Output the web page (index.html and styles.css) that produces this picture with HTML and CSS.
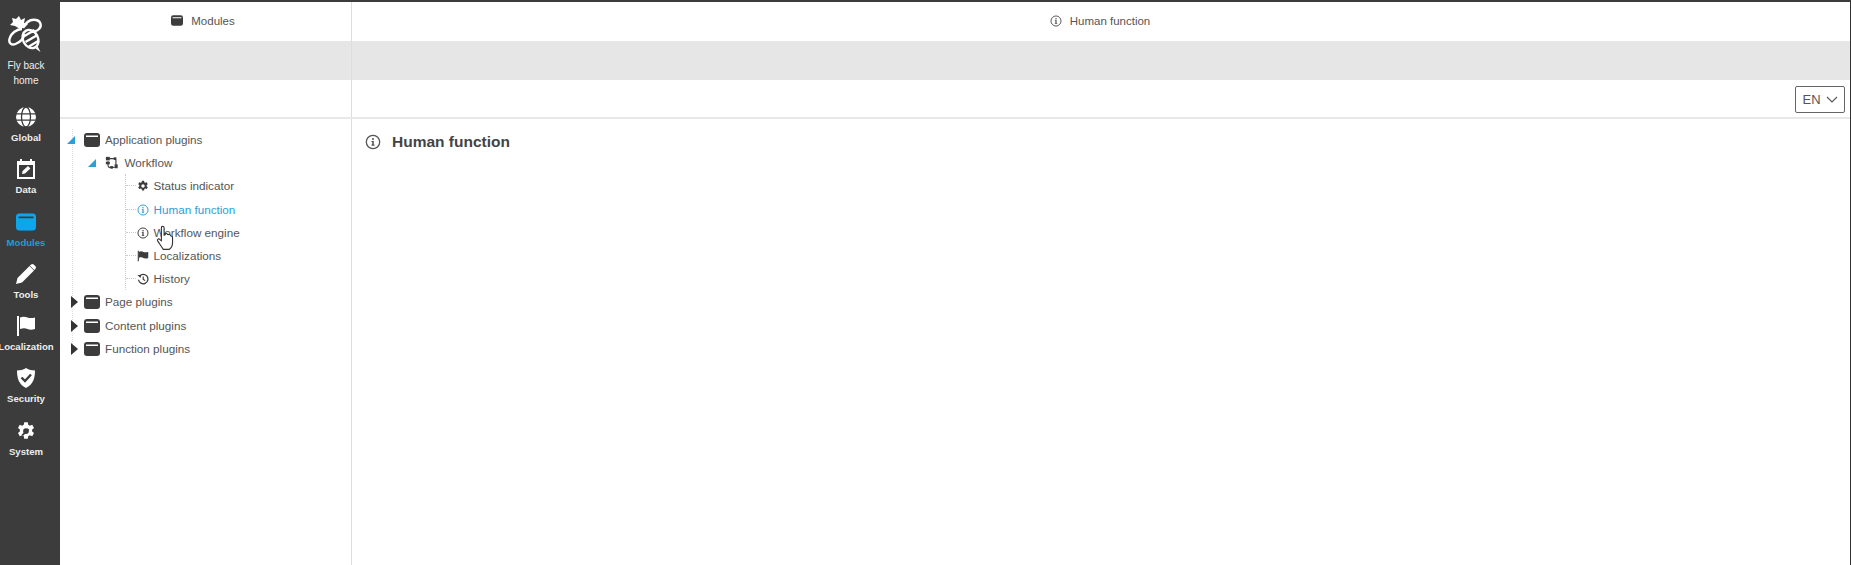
FILE: index.html
```html
<!DOCTYPE html>
<html lang="en">
<head>
<meta charset="utf-8">
<title>Human function</title>
<link rel="stylesheet" href="styles.css">
</head>
<body>
<svg class="defs" width="0" height="0" aria-hidden="true">
  <defs>
    <symbol id="win" viewBox="0 0 16 14"><path fill-rule="evenodd" d="M3 0h10a3 3 0 0 1 3 3v8a3 3 0 0 1-3 3H3a3 3 0 0 1-3-3V3a3 3 0 0 1 3-3zM2 2.600v1.400h12V2.600z"/></symbol>
    <symbol id="info" viewBox="0 0 16 16"><circle cx="8" cy="8" r="6.700" fill="none" stroke="currentColor" stroke-width="1.300"/><rect x="7.200" y="7" width="1.600" height="4.600"/><rect x="6.400" y="10.600" width="3.200" height="1"/><rect x="6.400" y="7" width="2" height="1"/><circle cx="8" cy="5" r="1"/></symbol>
    <symbol id="gear" viewBox="0 0 16 16"><path fill-rule="evenodd" d="M6.600 1h2.800l.4 2 1.300.7 1.900-.7 1.400 2.500-1.500 1.300v1.500l1.500 1.300-1.400 2.500-1.900-.7-1.300.7-.4 2H6.600l-.4-2-1.300-.7-1.900.7L1.600 9.600l1.500-1.300V6.800L1.600 5.500 3 3l1.900.7 1.300-.7zM8 5.700a2.300 2.300 0 1 0 0 4.600 2.300 2.300 0 0 0 0-4.600z"/></symbol>
    <symbol id="flag" viewBox="0 0 16 16"><path d="M1 1h1.500v14H1z"/><path d="M2.500 2.500c2.500-1.200 4.500-.8 6 0s3.500.8 6.500 0v8c-3 1-5 .8-6.500 0s-3.500-1-6 0z"/></symbol>
    <symbol id="hist" viewBox="0 0 16 16"><path fill="none" stroke="currentColor" stroke-width="1.700" d="M3 4.500A6.300 6.300 0 1 1 2 9"/><path d="M.6 2.600l4.800.2-.6 4z"/><path fill="none" stroke="currentColor" stroke-width="1.500" d="M8.300 4.500v4l2.500 1.500"/></symbol>
    <symbol id="flow" viewBox="0 0 16 16"><path fill="none" stroke="currentColor" stroke-width="1.300" d="M5 3h5.500a2 2 0 0 1 2 2v5M11 13H5.500a2 2 0 0 1-2-2V6"/><rect x="1" y="1" width="4.500" height="4"/><rect x="1" y="6.500" width="4.500" height="3"/><rect x="11" y="9.500" width="3.500" height="4.500"/><rect x="6" y="11.500" width="3" height="3"/><rect x="10" y="1.500" width="3" height="3"/></symbol>
  </defs>
</svg>
<div class="app">
  <nav class="rail">
    <a class="brand">
      <svg class="bee" viewBox="0 0 36 36" aria-hidden="true">
        <path fill="#fff" d="M11 0l2 4 4-2-1 5 4 1-3 3-5 2-5-3-5-1 3-3-1-4 4 1z"/>
        <g fill="none" stroke="#fff" stroke-width="2.400">
          <path d="M15 12c3-6 8-9 13-8 5 1 6 6 3 9-2 2-5 3-9 3"/>
          <path d="M14 13C9 13 3 17 1.500 23c-1 4 2 6.500 6 5 4-1.500 8-5 9-10"/>
          <ellipse cx="22.500" cy="23" rx="7.500" ry="9.500" transform="rotate(-28 22.500 23)"/>
          <path d="M16.500 20l10-6M17.500 26l12-7M21 30.500l10-6"/>
        </g>
        <path fill="#fff" d="M29.500 30l3 6-5-3.500z"/>
      </svg>
      <span class="brand-text">Fly back home</span>
    </a>
    <a class="rail-item">
      <svg viewBox="0 0 20 20" aria-hidden="true"><circle cx="10" cy="10" r="10" fill="#fff"/><g fill="none" stroke="#3c3c3c" stroke-width="1.300"><ellipse cx="10" cy="10" rx="4.500" ry="10"/><path d="M0 6.800h20M0 13.200h20"/></g></svg>
      <span>Global</span>
    </a>
    <a class="rail-item">
      <svg viewBox="0 0 20 20" aria-hidden="true"><path fill="#fff" fill-rule="evenodd" d="M4 0h2v2h8V0h2v2h3v18H1V2h3zM3 6v12h14V6z"/><path fill="#fff" d="M6 15l.6-3 5.400-5 2.400 2.400-5.400 5z"/></svg>
      <span>Data</span>
    </a>
    <a class="rail-item active">
      <svg viewBox="0 0 16 14" aria-hidden="true"><use href="#win"/></svg>
      <span>Modules</span>
    </a>
    <a class="rail-item">
      <svg viewBox="0 0 20 20" aria-hidden="true"><path fill="#fff" d="M0 20l1.500-6L13.500 2l4.500 4.500L6 18.500zM14.800.8c1-1 2.200-1 3.100-.1l1.400 1.400c.9.900.9 2.100-.1 3.100l-.9.900L13.800 1.600z"/></svg>
      <span>Tools</span>
    </a>
    <a class="rail-item">
      <svg viewBox="0 0 20 20" aria-hidden="true"><path fill="#fff" d="M1 0h2v20H1z"/><path fill="#fff" d="M4 1.500c3-1.300 5.500-.8 7.500 0s4.500.8 7.500 0V13c-3 1-5.500.9-7.500 0s-4.500-1-7.500 0z"/></svg>
      <span>Localization</span>
    </a>
    <a class="rail-item">
      <svg viewBox="0 0 20 20" aria-hidden="true"><path fill="#fff" d="M10 0c3 1.800 6 2.500 9 2.500 0 8-2 14-9 17.500C3 16.500 1 10.500 1 2.500 4 2.500 7 1.800 10 0z"/><path fill="none" stroke="#3c3c3c" stroke-width="2.400" d="M5.500 9.500l3.500 3.500 6-6.500"/></svg>
      <span>Security</span>
    </a>
    <a class="rail-item">
      <svg viewBox="0 0 16 16" aria-hidden="true"><use href="#gear"/><path fill="none" stroke="#3c3c3c" stroke-width="1.600" d="M5 11.500l5-5"/></svg>
      <span>System</span>
    </a>
  </nav>

  <main class="workspace">
    <div class="band band-title">
      <div class="col-left title title-modules"><svg class="ico ico-win"><use href="#win"/></svg>Modules</div>
      <div class="col-right title"><svg class="ico info-ico"><use href="#info"/></svg>Human function</div>
    </div>
    <div class="band band-gray">
      <div class="col-left"></div>
      <div class="col-right"></div>
    </div>
    <div class="band band-tools">
      <div class="col-left"></div>
      <div class="col-right tools">
        <button class="lang">EN<svg viewBox="0 0 12 7" aria-hidden="true"><path fill="none" stroke="currentColor" stroke-width="1.100" d="M1 1l5 5 5-5"/></svg></button>
      </div>
    </div>
    <div class="band band-body">
      <div class="col-left tree">
        <ul class="level-0">
          <li class="node open"><i class="arrow down"></i><svg class="ico big"><use href="#win"/></svg>Application plugins
            <ul class="level-1">
              <li class="node open"><i class="arrow down"></i><svg class="ico big"><use href="#flow"/></svg>Workflow
                <ul class="level-2">
                  <li class="leaf"><svg class="ico"><use href="#gear"/></svg>Status indicator</li>
                  <li class="leaf current"><svg class="ico"><use href="#info"/></svg>Human function</li>
                  <li class="leaf"><svg class="ico"><use href="#info"/></svg>Workflow engine</li>
                  <li class="leaf"><svg class="ico"><use href="#flag"/></svg>Localizations</li>
                  <li class="leaf"><svg class="ico"><use href="#hist"/></svg>History</li>
                </ul>
              </li>
            </ul>
          </li>
          <li class="node closed"><i class="arrow right"></i><svg class="ico big"><use href="#win"/></svg>Page plugins</li>
          <li class="node closed"><i class="arrow right"></i><svg class="ico big"><use href="#win"/></svg>Content plugins</li>
          <li class="node closed"><i class="arrow right"></i><svg class="ico big"><use href="#win"/></svg>Function plugins</li>
        </ul>
        <svg class="cursor" viewBox="0 0 16 22" aria-hidden="true"><path fill="#fff" stroke="#333" stroke-width="1" stroke-linejoin="round" d="M5 1.500c1-.8 2.200 0 2.200 1V9l1-.4V7.500c1-.7 2 0 2 .8l1 .1c.8-.4 1.700.2 1.700 1l.8.3c.6.200 1 .7 1 1.400v4.500c0 2.500-1.500 5-3 6H6.500C5 19.500 3.500 17 1.500 14c-.6-1 .3-2.200 1.500-1.600L4.800 14V2.800z"/></svg>
      </div>
      <div class="col-right page">
        <h1><svg class="ico h-ico"><use href="#info"/></svg>Human function</h1>
      </div>
    </div>
  </main>
</div>
</body>
</html>
```
FILE: styles.css
```css
* { box-sizing: border-box; }
html, body { margin: 0; height: 100%; }
body {
  font-family: "Liberation Sans", Arial, sans-serif;
  color: #555;
  background: #fff;
  overflow: hidden;
}
.defs { position: absolute; }
.app {
  display: flex;
  height: 565px;
  border-top: 2px solid #3c3c3c;
  border-right: 1px solid #333;
}
.rail {
  width: 60px;
  flex: none;
  background: #3c3c3c;
  color: #fff;
  display: flex;
  flex-direction: column;
  padding-right: 8px;
}
.brand {
  display: flex;
  flex-direction: column;
  align-items: center;
  padding-top: 14px;
  height: 105px;
  flex: none;
}
.bee { width: 36px; height: 36px; }
.brand-text {
  font-size: 10px;
  line-height: 15px;
  width: 48px;
  margin-top: 6px;
  text-align: center;
  color: #eee;
}
.rail-item {
  height: 52.300px;
  flex: none;
  display: flex;
  flex-direction: column;
  align-items: center;
  font-size: 9.600px;
  font-weight: 700;
  color: #eee;
}
.rail-item svg { width: 20px; height: 20px; fill: currentColor; flex: none; margin-bottom: 4px; color: #fff; }
.rail-item span { line-height: 13px; white-space: nowrap; }
.rail-item.active { color: #1a9ede; }
.rail-item.active svg { color: #0ea5ec; }

.workspace { flex: 1; display: flex; flex-direction: column; min-width: 0; }
.band { display: flex; flex: none; }
.col-left { width: 292px; flex: none; border-right: 1px solid #ddd; }
.col-right { flex: 1; min-width: 0; }
.band-title { height: 39px; }
.title {
  display: flex;
  align-items: center;
  justify-content: center;
  font-size: 11.500px;
  color: #555;
  gap: 8px;
  padding-bottom: 2px;
  padding-right: 2px;
}
.title-modules { padding-right: 5px; }
.band-gray { height: 39px; background: #e6e6e6; }
.band-tools { height: 39px; border-bottom: 2px solid #e8e8e8; }
.tools { display: flex; justify-content: flex-end; align-items: center; padding-right: 5px; padding-top: 1px; }
.lang {
  width: 50px;
  height: 27px;
  padding: 0;
  border: 1px solid #666;
  border-radius: 2px;
  background: #fff;
  font: 13px "Liberation Sans", Arial, sans-serif;
  color: #555;
  display: flex;
  align-items: center;
  justify-content: center;
  gap: 5px;
}
.lang svg { width: 12px; height: 7px; }
.band-body { flex: 1; min-height: 0; }
.ico { width: 12px; height: 12px; fill: currentColor; color: #3c3c3c; flex: none; }
.ico-win { height: 11px; }
.info-ico { color: #555; }

.tree { position: relative; font-size: 11.700px; color: #555; padding-top: 9px; }
.tree ul { list-style: none; margin: 0; padding: 0; }
.node, .leaf { position: relative; line-height: 23.200px; white-space: nowrap; }
.node { padding-left: 45px; }
.level-1 > .node { padding-left: 19.500px; }
.level-2 { margin-left: -20px; margin-bottom: 8.700px; }
.leaf { padding-left: 28px; }
.ico.big { width: 16px; height: 14px; position: absolute; margin-left: -21px; margin-top: 5px; }
.level-1 { margin-left: -25px; }
.level-1 .ico.big { width: 16px; height: 14px; margin-left: -21px; margin-top: 5px; }
.leaf .ico { position: absolute; left: 11px; top: 6px; }
.leaf.current { color: #2b9fd6; }
.leaf.current .ico { color: #2b9fd6; }
.level-0::before {
  content: "";
  position: absolute;
  left: 12px;
  top: 10px;
  height: 225px;
  border-left: 1px dotted #ddd;
}
.level-2 { border-left: 1px dotted #ccc; }
.level-2 .leaf::before {
  content: "";
  position: absolute;
  left: 0;
  top: 11px;
  width: 10px;
  border-top: 1px dotted #ccc;
}
.arrow { position: absolute; width: 0; height: 0; }
.arrow.down {
  margin-left: -38px;
  margin-top: 8px;
  border-bottom: 8px solid #2b9fd6;
  border-left: 8px solid transparent;
}
.level-1 .arrow.down { margin-left: -37px; margin-top: 8px; }
.arrow.right {
  margin-left: -34px;
  margin-top: 6px;
  border-left: 7px solid #333;
  border-top: 6px solid transparent;
  border-bottom: 6px solid transparent;
}
.cursor { position: absolute; left: 96px; top: 105px; width: 18px; height: 27px; }

.page { padding: 13px 13px; }
h1 {
  margin: 0;
  display: flex;
  align-items: center;
  gap: 11px;
  font-size: 15.500px;
  line-height: 20px;
  color: #444;
  font-weight: 700;
}
.h-ico { width: 16px; height: 16px; color: #555; }
```
